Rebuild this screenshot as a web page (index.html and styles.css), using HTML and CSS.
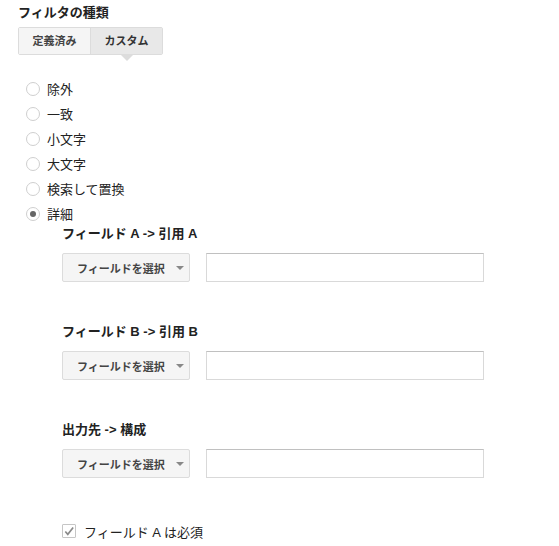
FILE: index.html
```html
<!DOCTYPE html>
<html lang="ja">
<head>
<meta charset="utf-8">
<link rel="stylesheet" href="styles.css">
</head>
<body>
<div class="title">フィルタの種類</div>
<div class="tabs">
  <div class="tab">定義済み</div>
  <div class="tab selected">カスタム</div>
</div>
<ul class="radios">
  <li class="radio-row"><span class="radio"></span><span>除外</span></li>
  <li class="radio-row"><span class="radio"></span><span>一致</span></li>
  <li class="radio-row"><span class="radio"></span><span>小文字</span></li>
  <li class="radio-row"><span class="radio"></span><span>大文字</span></li>
  <li class="radio-row"><span class="radio"></span><span>検索して置換</span></li>
  <li class="radio-row"><span class="radio checked"></span><span>詳細</span></li>
</ul>
<div class="fields">
  <div class="section">
    <div class="label">フィールド A -&gt; 引用 A</div>
    <div class="controls">
      <div class="select"><span>フィールドを選択</span><span class="caret"></span></div>
      <div class="input"></div>
    </div>
  </div>
  <div class="section">
    <div class="label">フィールド B -&gt; 引用 B</div>
    <div class="controls">
      <div class="select"><span>フィールドを選択</span><span class="caret"></span></div>
      <div class="input"></div>
    </div>
  </div>
  <div class="section">
    <div class="label">出力先 -&gt; 構成</div>
    <div class="controls">
      <div class="select"><span>フィールドを選択</span><span class="caret"></span></div>
      <div class="input"></div>
    </div>
  </div>
  <div class="check-row">
    <span class="checkbox">
      <svg width="13" height="13" viewBox="0 0 13 13"><path d="M2.5 6.5 L5.2 9.6 L11 2.2" fill="none" stroke="#8a8a8a" stroke-width="1.8"/></svg>
    </span>
    <span>フィールド A は必須</span>
  </div>
</div>
</body>
</html>
```

FILE: styles.css
```css
html, body {
  margin: 0;
  padding: 0;
  background: #fff;
}
body {
  font-family: Arial, "Liberation Sans", "Noto Sans CJK JP", sans-serif;
  font-size: 13px;
  color: #222;
}
.title {
  margin-top: 5px;
  padding-left: 18px;
  font-weight: bold;
  line-height: 16px;
  color: #222;
}
.tabs {
  display: flex;
  margin: 6px 0 0 18px;
  width: max-content;
  border: 1px solid #dcdcdc;
  border-radius: 2px;
}
.tab {
  position: relative;
  width: 71px;
  height: 26px;
  line-height: 26px;
  text-align: center;
  font-size: 11px;
  font-weight: bold;
  color: #444;
  background: #f5f5f5;
}
.tab + .tab {
  border-left: 1px solid #dcdcdc;
}
.tab.selected {
  background: #e8e8e8;
  color: #333;
}
.tab.selected::after {
  content: "";
  position: absolute;
  left: 50%;
  bottom: -7px;
  margin-left: -6px;
  border-left: 6px solid transparent;
  border-right: 6px solid transparent;
  border-top: 6px solid #dcdcdc;
}
.radios {
  list-style: none;
  margin: 21px 0 0 0;
  padding: 0 0 0 26px;
}
.radio-row {
  display: flex;
  align-items: center;
  height: 25px;
  gap: 7px;
}
.radio {
  box-sizing: border-box;
  width: 14px;
  height: 14px;
  border: 1px solid #cfcfcf;
  border-radius: 50%;
  background: #fff;
  display: flex;
  align-items: center;
  justify-content: center;
}
.radio.checked::after {
  content: "";
  width: 6px;
  height: 6px;
  border-radius: 50%;
  background: #666;
}
.fields {
  padding-left: 62px;
}
.section {
  height: 98px;
}
.label {
  line-height: 16px;
  font-weight: bold;
  color: #222;
}
.controls {
  display: flex;
  gap: 16px;
  margin-top: 11px;
}
.select {
  box-sizing: border-box;
  width: 128px;
  height: 29px;
  border: 1px solid #dcdcdc;
  border-radius: 2px;
  background: #f5f5f5;
  display: flex;
  align-items: center;
  padding-left: 14px;
  font-size: 11px;
  font-weight: bold;
  color: #444;
}
.caret {
  margin-left: 11px;
  width: 0;
  height: 0;
  border-left: 4px solid transparent;
  border-right: 4px solid transparent;
  border-top: 4px solid #888;
}
.input {
  box-sizing: border-box;
  width: 278px;
  height: 29px;
  border: 1px solid #d9d9d9;
  border-top-color: #c0c0c0;
  background: #fff;
}
.check-row {
  display: flex;
  align-items: center;
  gap: 8px;
  margin-top: 3px;
  height: 16px;
}
.checkbox {
  box-sizing: border-box;
  width: 14px;
  height: 14px;
  border: 1px solid #c6c6c6;
  border-radius: 1px;
  display: flex;
  align-items: center;
  justify-content: center;
}
.checkbox svg {
  display: block;
}
```
